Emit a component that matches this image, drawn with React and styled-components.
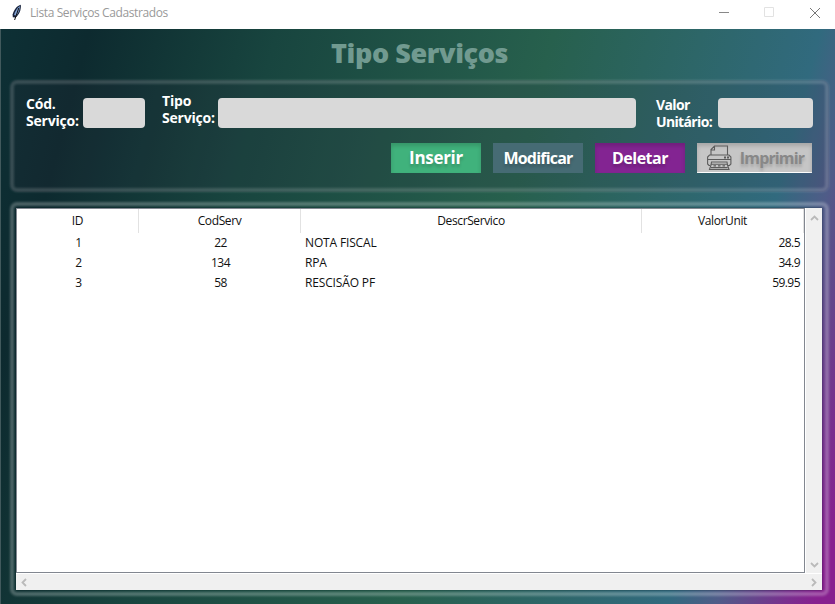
import React from "react";
import styled, { createGlobalStyle } from "styled-components";

const GlobalStyle = createGlobalStyle`
  * { box-sizing: border-box; }
  html, body { margin: 0; padding: 0; overflow: hidden; }
`;

const Window = styled.main`
  width: 835px;
  height: 604px;
  display: flex;
  flex-direction: column;
  font-family: "Open Sans", "Noto Sans", sans-serif;
  background: #fff;
`;

const TitleBar = styled.header`
  height: 29px;
  display: flex;
  align-items: center;
  padding: 0 14px 4px 11px;
  background: #fff;
  color: #999;
  font-size: 12px;
`;

const WindowTitle = styled.span`
  margin-left: 7px;
  flex: 1;
  line-height: 16px;
  letter-spacing: -0.4px;
`;

const WindowControls = styled.div`
  display: flex;
  align-items: center;
  gap: 34px;
`;

const Body = styled.section`
  flex: 1;
  display: flex;
  flex-direction: column;
  align-items: flex-start;
  padding-left: 9px;
  border-left: 1px solid #41595c;
  background: linear-gradient(105deg, #0d3035 0%, #0d2a2f 9%, #18453f 28%, #27604d 56%, #2d6668 71%, #316a7e 83%, #4f5c88 88%, #792f8e 95%, #87208f 98%);
`;

const Heading = styled.h1`
  width: 100%;
  height: 51px;
  margin: 0;
  padding: 3px 0 0 321px;
  font-size: 27px;
  line-height: 42px;
  font-weight: 800;
  letter-spacing: -0.4px;
  color: #719a90;
  white-space: nowrap;
`;

const glow = (alpha) => `
  position: relative;
  &::before {
    content: "";
    position: absolute;
    inset: 0;
    border: 4px solid rgba(255, 255, 255, ${alpha});
    border-radius: 7px;
    filter: blur(1px);
    pointer-events: none;
  }
`;

const Panel = styled.form`
  ${glow(0.16)}
  width: 819px;
  height: 112px;
  padding: 18px 15px 0 16px;
  border-radius: 7px;
  background: rgba(55, 40, 60, 0.13);
`;

const FieldRow = styled.div`
  display: flex;
  height: 30px;
`;

const FieldLabel = styled.label`
  width: ${(p) => p.$width}px;
  margin-top: ${(p) => p.$shift}px;
  height: 34px;
  color: #fff;
  font-size: 14px;
  font-weight: 700;
  line-height: 17px;
  letter-spacing: ${(p) => p.$spacing || -0.2}px;
  white-space: pre;
`;

const Field = styled.input`
  width: ${(p) => p.$width}px;
  height: 30px;
  margin: 0 ${(p) => p.$gap}px 0 0;
  padding: 0 6px;
  border: 0;
  border-radius: 4px;
  background: #d9d9d9;
`;

const ButtonRow = styled.div`
  display: flex;
  justify-content: flex-end;
  gap: 12px;
  margin-top: 15px;
  padding-right: 2px;
`;

const Button = styled.button`
  width: ${(p) => p.$width || 90}px;
  height: 30px;
  display: flex;
  align-items: center;
  justify-content: center;
  gap: 8px;
  padding: 0 0 0 ${(p) => p.$inset || 0}px;
  border: 0;
  font: 700 16px/30px "Open Sans", sans-serif;
  font-size: ${(p) => p.$size || 16}px;
  letter-spacing: ${(p) => p.$spacing || -0.3}px;
  color: ${(p) => p.$ink || "#fff"};
  background: ${(p) => p.$color};
  box-shadow: ${(p) => p.$edge || "inset 0 3px 4px rgba(0, 0, 0, 0.16)"};
  text-shadow: 0 3px 3px rgba(0, 0, 0, 0.18);
`;

const TablePanel = styled.section`
  ${glow(0.25)}
  width: 819px;
  height: 394px;
  margin-top: 10px;
  padding: 6px;
`;

const TableFrame = styled.div`
  position: relative;
  width: 806px;
  height: 382px;
  display: grid;
  grid-template-columns: 789px 17px;
  grid-template-rows: 365px 17px;
  background: #f0f0f0;
  box-shadow: 0 0 2px rgba(0, 20, 30, 0.5);
`;

const Table = styled.div`
  background: #fff;
  border: 1px solid #828790;
  color: #111;
  font-size: 12px;
`;

const Row = styled.div`
  display: grid;
  grid-template-columns: 122px 162px 341px 162px;
  height: ${(p) => (p.$head ? 24 : 20)}px;
  line-height: ${(p) => (p.$head ? 23 : 20)}px;
`;

const HeaderCell = styled.span`
  text-align: center;
  letter-spacing: -0.38px;
  border-right: 1px solid #e2e2e2;
`;

const Cell = styled.span`
  text-align: ${(p) => p.$align};
  padding: 0 4px 0 ${(p) => (p.$align === "center" ? 5 : 4)}px;
  letter-spacing: ${(p) => (p.$align === "left" ? -0.15 : -0.55)}px;
`;

const VerticalBar = styled.div`
  display: flex;
  flex-direction: column;
  align-items: center;
  justify-content: space-between;
  padding: 6px 0 4px;
  border-left: 1px solid #fff;
`;

const HorizontalBar = styled.div`
  grid-column: 1 / 3;
  display: flex;
  align-items: center;
  justify-content: space-between;
  padding: 0 4px;
  border-top: 1px solid #fff;
`;

const arrows = {
  up: "M1 6 4.5 2.5 8 6",
  down: "M1 3 4.5 6.5 8 3",
  left: "M6 1 2.5 4.5 6 8",
  right: "M3 1 6.5 4.5 3 8",
};

function Arrow({ dir }) {
  return (
    <svg width="9" height="9" fill="none" stroke="#bababa" strokeWidth="1.8">
      <path d={arrows[dir]} />
    </svg>
  );
}

function Feather() {
  return (
    <svg width="12" height="17" viewBox="0 0 12 17">
      <path d="M9.8.8C6.2 1.6 3 5.5 1.6 10.5L1.8 13.2 4.5 13.5C8.3 11 10.3 5.5 9.8.8Z" fill="#16203a" />
      <path d="M8.9 2C6.3 3.5 4 7.5 3 11L5.2 11.8C7.6 9 9 5.5 8.9 2Z" fill="#7f9fd0" />
      <path d="M7.8 4 3.6 16" stroke="#111" strokeWidth="1" />
    </svg>
  );
}

function Printer() {
  return (
    <svg width="25" height="26" viewBox="0 0 25 26" fill="none" stroke="#5c5c5c" strokeWidth="1.1">
      <path d="M4 10V4.5L7.5 1H20.5V10M4 5H7.5V1.5" />
      <path d="M3 20.5H2L.6 19V12L2.5 10H22L23.9 12V19L22.5 20.5H21M1 14.5H23.5" />
      <path d="M4.5 17H20L20.5 20 22 24.5H2.5L4 20ZM4 19.2H20.5M4 22.6H20.5" />
      <path d="M17 12.5H19M20 12.5H22" strokeWidth="1.8" />
      <path d="M6.5 20.9H9M11 20.9H13.5M15.5 20.9H18" />
    </svg>
  );
}

const columns = ["ID", "CodServ", "DescrServico", "ValorUnit"];

const services = [
  ["1", "22", "NOTA FISCAL", "28.5"],
  ["2", "134", "RPA", "34.9"],
  ["3", "58", "RESCISÃO PF", "59.95"],
];

const alignments = ["center", "center", "left", "right"];

export default function App() {
  return (
    <Window>
      <GlobalStyle />
      <TitleBar>
        <Feather />
        <WindowTitle>Lista Serviços Cadastrados</WindowTitle>
        <WindowControls>
          <svg width="11" height="11" stroke="#888"><path d="M0 5.5H10" /></svg>
          <svg width="11" height="11" fill="none" stroke="#e2e2e2"><path d="M.5.5H9.5V9.5H.5Z" /></svg>
          <svg width="12" height="12" stroke="#777"><path d="M1 1 11 11M11 1 1 11" /></svg>
        </WindowControls>
      </TitleBar>
      <Body>
        <Heading>Tipo Serviços</Heading>
        <Panel>
          <FieldRow>
            <FieldLabel $width={57} $shift={-3}>{"Cód.\nServiço:"}</FieldLabel>
            <Field $width={62} $gap={17} />
            <FieldLabel $width={56} $shift={-6}>{"Tipo\nServiço:"}</FieldLabel>
            <Field $width={418} $gap={20} />
            <FieldLabel $width={62} $shift={-2} $spacing={-0.65}>{"Valor\nUnitário:"}</FieldLabel>
            <Field $width={95} $gap={0} />
          </FieldRow>
          <ButtonRow>
            <Button type="button" $color="#40b27c" $size={17}>Inserir</Button>
            <Button type="button" $color="#466b74" $edge="none" $spacing={-0.8}>Modificar</Button>
            <Button type="button" $color="#832492" $spacing={-0.5}>Deletar</Button>
            <Button type="button" $color="#c6c6c6" $ink="#888" $width={115} $inset={2} $spacing={-0.85} $edge="inset 0 3px 4px rgba(0,0,0,.16), inset 0 -1px #fff">
              <Printer />Imprimir
            </Button>
          </ButtonRow>
        </Panel>
        <TablePanel>
          <TableFrame>
            <Table>
              <Row $head>
                {columns.map((name) => <HeaderCell key={name}>{name}</HeaderCell>)}
              </Row>
              {services.map((service) => (
                <Row key={service[0]}>
                  {service.map((value, i) => <Cell key={columns[i]} $align={alignments[i]}>{value}</Cell>)}
                </Row>
              ))}
            </Table>
            <VerticalBar><Arrow dir="up" /><Arrow dir="down" /></VerticalBar>
            <HorizontalBar><Arrow dir="left" /><Arrow dir="right" /></HorizontalBar>
          </TableFrame>
        </TablePanel>
      </Body>
    </Window>
  );
}
